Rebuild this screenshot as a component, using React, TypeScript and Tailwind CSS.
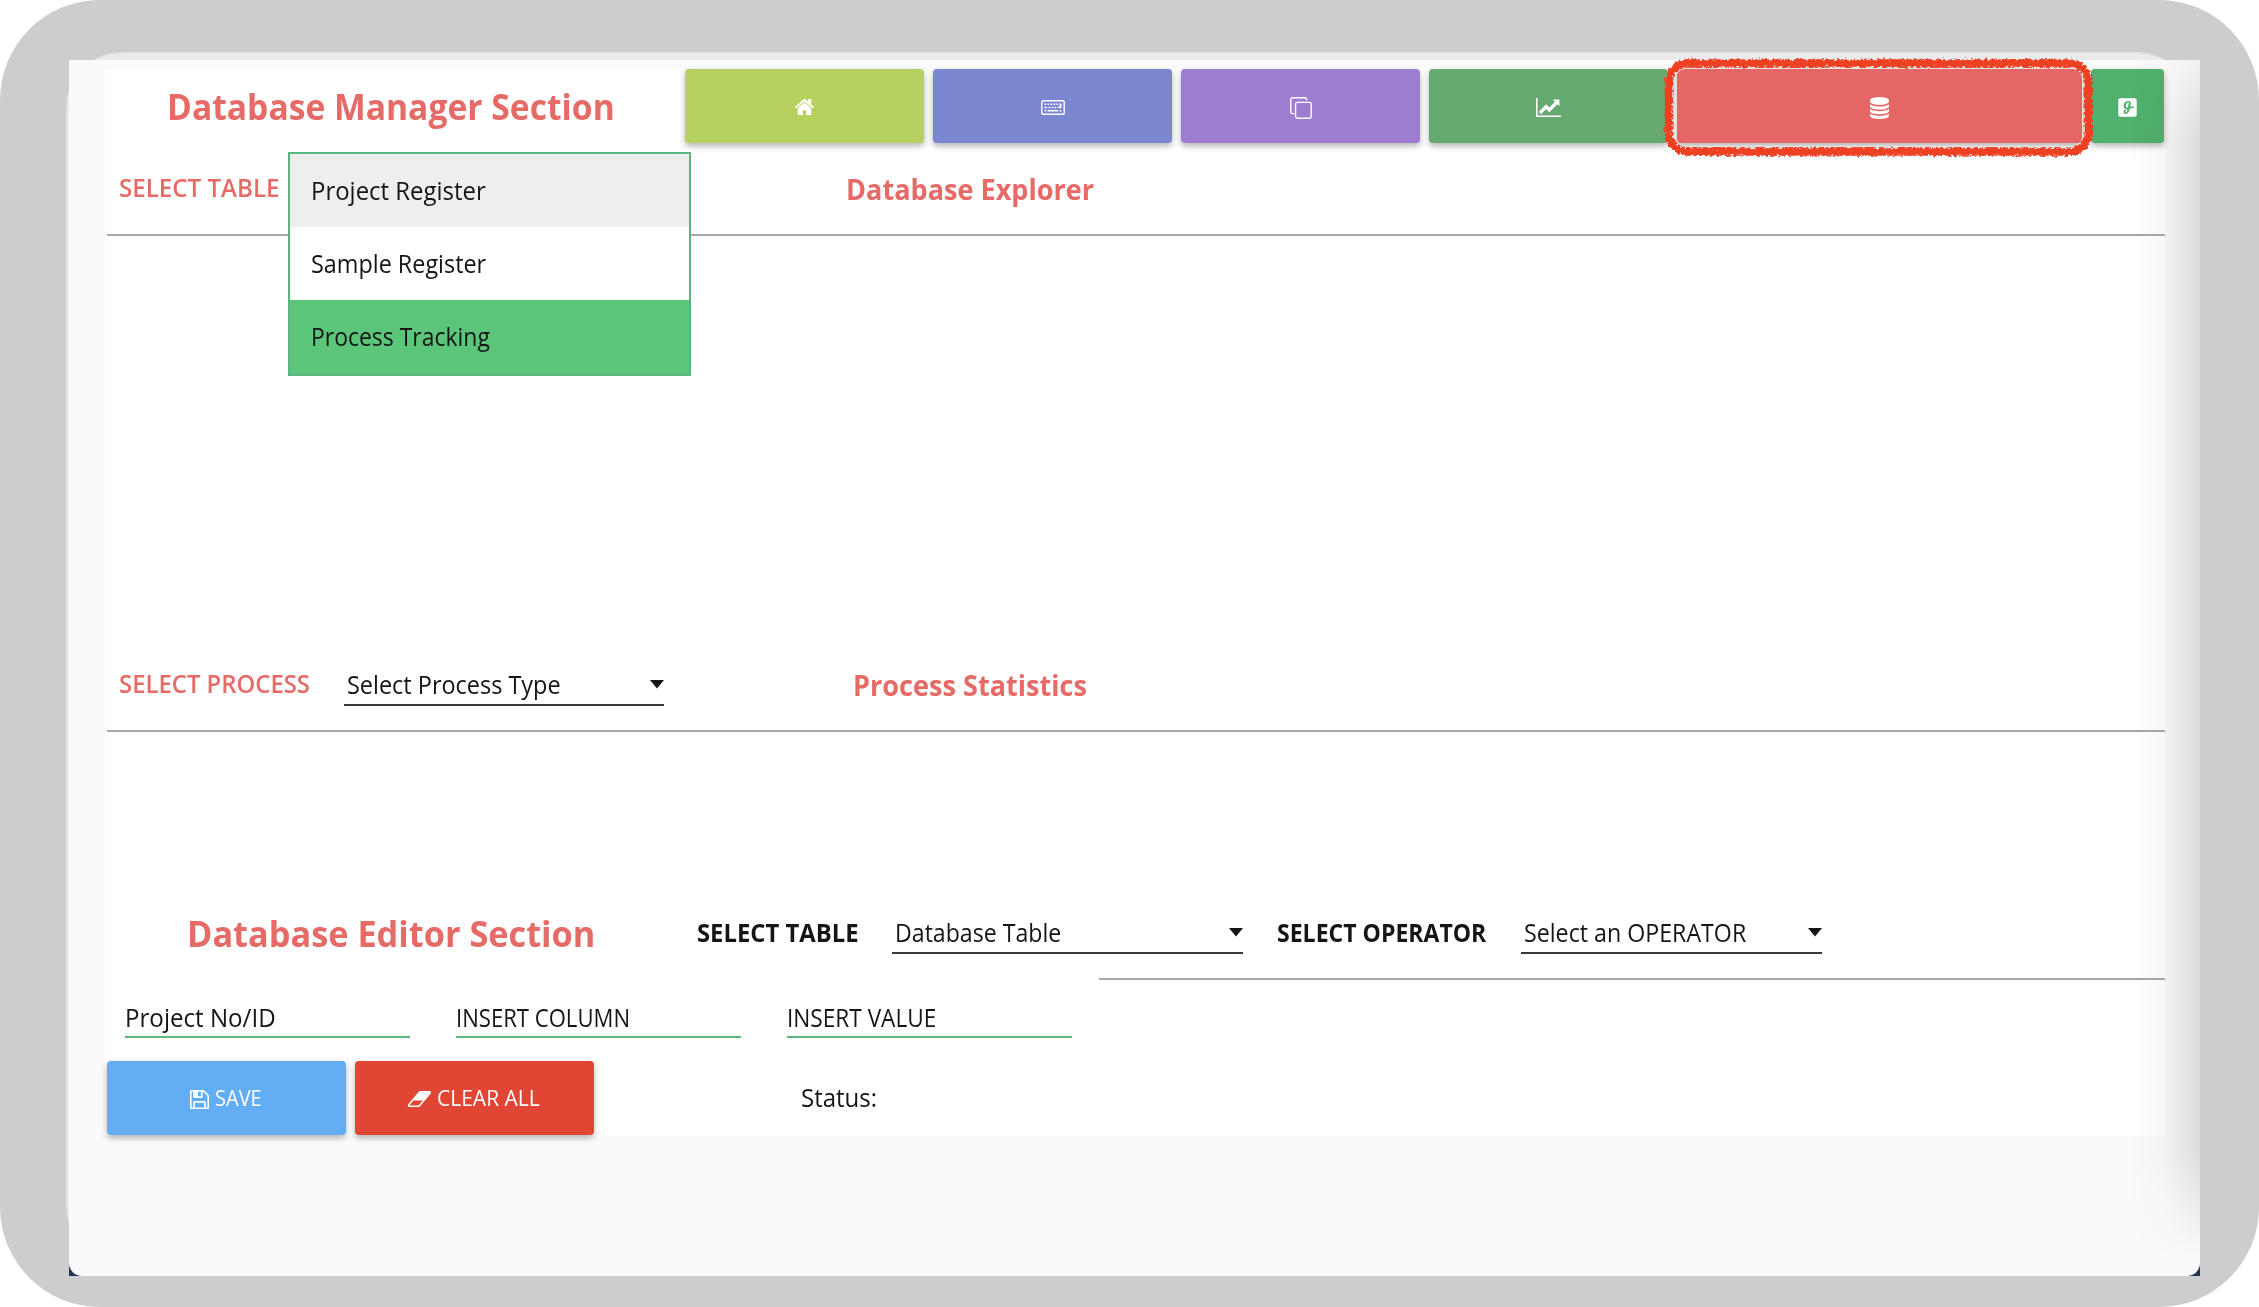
import React from "react";
import { FaGlide } from "react-icons/fa";

const FONT = "font-['Open_Sans',sans-serif]";

function Glyph({ d, box, className }: { d: string; box: string; className: string }) {
  return (
    <svg viewBox={box} className={className} fill="currentColor" preserveAspectRatio="none">
      <path d={d} />
    </svg>
  );
}

const HOME =
  "M1472 992v480q0 26-19 45t-45 19h-384v-384h-256v384h-384q-26 0-45-19t-19-45v-480q0-1 .5-3t.5-3l575-474 575 474q1 2 1 6zm223-69l-62 74q-8 9-21 11h-3q-13 0-21-7l-692-577-692 577q-12 8-24 7-13-2-21-11l-62-74q-8-10-7-23.5t11-21.5l719-599q32-26 76-26t76 26l244 204v-195q0-14 9-23t23-9h192q14 0 23 9t9 23v408l219 182q10 8 11 21.5t-7 23.5z";
const DATABASE =
  "M896 768q237 0 443-43t325-127v170q0 69-103 128t-280 93.5-385 34.5-385-34.5-280-93.5-103-128v-170q119 84 325 127t443 43zm0 768q237 0 443-43t325-127v170q0 69-103 128t-280 93.5-385 34.5-385-34.5-280-93.5-103-128v-170q119 84 325 127t443 43zm0-384q237 0 443-43t325-127v170q0 69-103 128t-280 93.5-385 34.5-385-34.5-280-93.5-103-128v-170q119 84 325 127t443 43zm0-1152q208 0 385 34.5t280 93.5 103 128v128q0 69-103 128t-280 93.5-385 34.5-385-34.5-280-93.5-103-128v-128q0-69 103-128t280-93.5 385-34.5z";
const CHART =
  "M2048 1536v128h-2048v-1536h128v1408h1920zm-128-1248v435q0 21-19.5 29.5t-35.5-7.5l-121-121-633 633q-10 10-23 10t-23-10l-233-233-416 416-192-192 585-585q10-10 23-10t23 10l233 233 464-464-121-121q-16-16-7.5-35.5t29.5-19.5h435q14 0 23 9t9 23z";
const ERASER =
  "M960 1408l336-384h-768l-336 384h768zm1013-1077q15 34 9.5 71.5t-30.5 65.5l-896 1024q-38 44-96 44h-768q-38 0-69.5-20.5t-47.5-54.5q-15-34-9.5-71.5t30.5-65.5l896-1024q38-44 96-44h768q38 0 69.5 20.5t47.5 54.5z";
const FLOPPY =
  "M512 1536h768v-384h-768v384zm896 0h128v-896q0-14-10-38.5t-20-34.5l-281-281q-10-10-34-20t-39-10v416q0 40-28 68t-68 28h-576q-40 0-68-28t-28-68v-416h-128v1280h128v-416q0-40 28-68t68-28h832q40 0 68 28t28 68v416zm-384-928v-320q0-13-9.5-22.5t-22.5-9.5h-192q-13 0-22.5 9.5t-9.5 22.5v320q0 13 9.5 22.5t22.5 9.5h192q13 0 22.5-9.5t9.5-22.5zm640 32v928q0 40-28 68t-68 28h-1344q-40 0-68-28t-28-68v-1344q0-40 28-68t68-28h928q40 0 88 20t76 48l280 280q28 28 48 76t20 88z";

function KeyboardIcon() {
  return (
    <svg viewBox="0 0 24 15" className="h-[15px] w-[24px]" fill="currentColor">
      <rect x="0.8" y="0.8" width="22.4" height="13.4" rx="1.2" fill="none" stroke="currentColor" strokeWidth="1.4" />
      <path d="M3.5 3.5h1.7v1.4H3.5zM6.5 3.5h1.7v1.4H6.5zM9.5 3.5h1.7v1.4H9.5zM12.5 3.5h1.7v1.4h-1.7zM15.5 3.5h1.7v1.4h-1.7zM3.5 6.8h2.7v1.4H3.5zM7.5 6.8h1.7v1.4H7.5zM10.5 6.8h1.7v1.4h-1.7zM13.5 6.8h1.7v1.4h-1.7zM18.6 3.5h1.8v4.7h-3.6V6.8h1.8zM3.5 10.1h1.7v1.4H3.5zM6.6 10.1h10.6v1.4H6.6zM18.7 10.1h1.7v1.4h-1.7z" />
    </svg>
  );
}

function CopyIcon() {
  return (
    <svg viewBox="0 0 22 22" className="h-[22px] w-[22px]" fill="none" stroke="currentColor" strokeWidth="1.4">
      <rect x="5.6" y="5.4" width="15.6" height="15.8" rx="1.6" />
      <path d="M16.6 3.6V2.2a1.4 1.4 0 0 0-1.4-1.4H2.2A1.4 1.4 0 0 0 .8 2.2v13a1.4 1.4 0 0 0 1.4 1.4h2" />
    </svg>
  );
}

const RAISED = "shadow-[0_3px_6px_rgba(0,0,0,0.3)]";

function Text({ children, fit }: { children: string; fit: string }) {
  return <span className={`inline-block origin-left whitespace-nowrap ${fit}`}>{children}</span>;
}

function Tile({ tone, children }: { tone: string; children: React.ReactNode }) {
  return (
    <button className={`flex h-[74px] shrink-0 items-center justify-center rounded-[4px] text-white ${RAISED} ${tone}`}>
      {children}
    </button>
  );
}

function Select({ label, width, fit }: { label: string; width: string; fit: string }) {
  return (
    <div className={`flex h-[42px] shrink-0 items-start justify-between border-b-2 border-[#3a3a3a] pl-[3px] text-[25px] leading-[40px] text-[#151515] ${width}`}>
      <Text fit={fit}>{label}</Text>
      <svg viewBox="0 0 14 9" className="mt-[16px] h-[9px] w-[14px] fill-[#151515]">
        <path d="M0 0h14L7 8.6z" />
      </svg>
    </div>
  );
}

function Input({ label, fit }: { label: string; fit: string }) {
  return (
    <div className="flex h-[40px] w-[285px] shrink-0 border-b-2 border-[#5eb87b] text-[25px] leading-[39px] text-[#151515]">
      <Text fit={fit}>{label}</Text>
    </div>
  );
}

function Rule({ width }: { width: string }) {
  return <div className={`h-[2px] shrink-0 self-end bg-[#a9a9a9] ${width}`} />;
}

function RoughOutline() {
  return (
    <svg viewBox="0 0 444 110" className="pointer-events-none absolute -left-[20px] -top-[16px] h-[110px] w-[444px]">
      <defs>
        <filter id="rough" x="-5%" y="-10%" width="110%" height="120%">
          <feTurbulence type="fractalNoise" baseFrequency="0.35" numOctaves="2" seed="4" result="n" />
          <feDisplacementMap in="SourceGraphic" in2="n" scale="6" xChannelSelector="R" yChannelSelector="G" />
        </filter>
        <filter id="speckle" x="-5%" y="-10%" width="110%" height="120%">
          <feTurbulence type="fractalNoise" baseFrequency="0.3" numOctaves="2" seed="9" result="n" />
          <feColorMatrix in="n" type="matrix" values="0 0 0 0 0  0 0 0 0 0  0 0 0 0 0  12 0 0 0 -5.6" result="m" />
          <feComposite in="SourceGraphic" in2="m" operator="in" />
        </filter>
      </defs>
      <rect x="16" y="13" width="412" height="83" rx="12" fill="none" stroke="#e6e2e2" strokeWidth="6" />
      <rect x="11.5" y="10" width="420" height="89" rx="19" fill="none" stroke="#ee4023" strokeWidth="7.5" filter="url(#rough)" />
      <rect x="14.5" y="13" width="414" height="83" rx="15" fill="none" stroke="#ee4023" strokeWidth="4" filter="url(#speckle)" />
    </svg>
  );
}

export default function App() {
  return (
    <div className={`relative h-[1307px] w-[2259px] overflow-hidden bg-white ${FONT}`}>
      <div className="h-full w-full rounded-[100px] bg-[#cdcdcd] pl-[66px] pt-[52px]">
        <div className="h-[1210px] w-[2127px] rounded-[56px] border border-[#e2e2e2] bg-[#eaeaea] pl-[2px] pt-[6.5px]">
          <div className="relative h-[1216px] w-[2131px] bg-[#1f3354]">
            <div className="h-full w-full rounded-b-[13px] bg-[#fafafa] pl-[36px] pt-[9px]">
              <main className="flex h-[1067px] w-[2060px] flex-col bg-white pl-px">
                <div className="flex h-[76px] shrink-0 gap-[9px] pt-[0.5px]">
                  <h1 className="w-[570px] shrink-0 pl-[61px] text-[36px] font-bold leading-[76px] text-[#e66a66]">
                    <Text fit="scale-x-[0.934]">Database Manager Section</Text>
                  </h1>
                  <Tile tone="w-[239px] bg-[#b6d15f] pt-[2px]"><Glyph d={HOME} box="89 253 1614 1283" className="h-[16px] w-[19px]" /></Tile>
                  <Tile tone="w-[239px] bg-[#7b86d0] pt-[3px]"><KeyboardIcon /></Tile>
                  <Tile tone="w-[239px] bg-[#9c7dcf] pt-[3px]"><CopyIcon /></Tile>
                  <Tile tone="w-[239px] bg-[#67aa71] pt-[3px]"><Glyph d={CHART} box="0 128 2048 1536" className="h-[19px] w-[25px]" /></Tile>
                  <div className="relative shrink-0">
                    <Tile tone="w-[405px] bg-[#e46765] pt-[3px]"><Glyph d={DATABASE} box="128 0 1536 1792" className="h-[22px] w-[19px]" /></Tile>
                    <RoughOutline />
                  </div>
                  <Tile tone="w-[73px] bg-[#51b06e] pt-[3px]"><FaGlide className="h-[21px] w-[19px]" /></Tile>
                </div>

                <section className="relative flex h-[91px] shrink-0 flex-col justify-between">
                  <div className="flex items-start pl-[13px] pt-[23px]">
                    <span className="w-[727px] shrink-0 text-[25px] font-semibold leading-[39px] text-[#e66a66]"><Text fit="scale-x-[0.965]">SELECT TABLE</Text></span>
                    <h2 className="text-[29px] font-bold leading-[42px] text-[#e66a66]"><Text fit="scale-x-[0.934]">Database Explorer</Text></h2>
                  </div>
                  <Rule width="w-[2058px]" />
                  <ul className="absolute left-[182px] top-[7px] w-[403px] border-2 border-[#5bb580] bg-white text-[25px] leading-[73px] text-[#151515]">
                    <li className="h-[73px] bg-[#eeeeee] pl-[21px]"><Text fit="scale-x-[0.958]">Project Register</Text></li>
                    <li className="h-[73px] pl-[21px]"><Text fit="scale-x-[0.935]">Sample Register</Text></li>
                    <li className="h-[74px] bg-[#5bc57a] pl-[21px]"><Text fit="scale-x-[0.918]">Process Tracking</Text></li>
                  </ul>
                </section>

                <section className="mt-[405px] flex h-[91px] shrink-0 flex-col justify-between">
                  <div className="flex items-start pl-[13px] pt-[23px]">
                    <span className="w-[225px] shrink-0 text-[25px] font-semibold leading-[39px] text-[#e66a66]"><Text fit="scale-x-[0.955]">SELECT PROCESS</Text></span>
                    <Select label="Select Process Type" width="w-[320px]" fit="scale-x-[0.938]" />
                    <h2 className="pl-[189px] text-[29px] font-bold leading-[42px] text-[#e66a66]"><Text fit="scale-x-[0.934]">Process Statistics</Text></h2>
                  </div>
                  <Rule width="w-[2058px]" />
                </section>

                <section className="mt-[157px] flex h-[91px] shrink-0 flex-col justify-between">
                  <div className="flex items-start pl-px pt-[23px]">
                    <h1 className="w-[590px] shrink-0 pl-[80px] text-[36px] font-bold leading-[44px] text-[#e66a66]"><Text fit="scale-x-[0.953]">Database Editor Section</Text></h1>
                    <span className="w-[195px] shrink-0 text-[25px] font-bold leading-[40px] text-[#151515]"><Text fit="scale-x-[0.953]">SELECT TABLE</Text></span>
                    <Select label="Database Table" width="w-[351px]" fit="scale-x-[0.925]" />
                    <span className="w-[278px] shrink-0 pl-[34px] text-[25px] font-bold leading-[40px] text-[#151515]"><Text fit="scale-x-[0.922]">SELECT OPERATOR</Text></span>
                    <Select label="Select an OPERATOR" width="w-[301px]" fit="scale-x-[0.928]" />
                  </div>
                  <Rule width="w-[1066px]" />
                </section>

                <div className="mt-[18px] flex shrink-0 gap-[46px] pl-[19px]">
                  <Input label="Project No/ID" fit="scale-x-[0.965]" />
                  <Input label="INSERT COLUMN" fit="scale-x-[0.884]" />
                  <Input label="INSERT VALUE" fit="scale-x-[0.905]" />
                </div>

                <div className="mt-[23px] flex shrink-0 gap-[9px] pl-px">
                  <Tile tone="w-[239px] bg-[#62adf3] gap-[6px] pl-[4px] text-[22px]"><Glyph d={FLOPPY} box="128 128 1536 1536" className="mt-[3px] h-[19px] w-[19px]" /><Text fit="scale-x-[0.91]">SAVE</Text></Tile>
                  <Tile tone="w-[239px] bg-[#e14534] gap-[6px] pl-[3px] text-[22px]"><Glyph d={ERASER} box="0 256 1984 1280" className="mt-[3px] h-[16px] w-[24px]" /><Text fit="scale-x-[0.955]">CLEAR ALL</Text></Tile>
                  <span className="pl-[198px] text-[25px] leading-[72px] text-[#151515]"><Text fit="scale-x-[0.96]">Status:</Text></span>
                </div>
              </main>
            </div>
            <div className="pointer-events-none absolute right-0 top-0 h-full w-[70px] bg-linear-to-r from-transparent via-black/3 to-black/12 mask-[linear-gradient(to_bottom,rgba(0,0,0,.3),black_80px,black_1090px,transparent_1200px)]" />
          </div>
        </div>
      </div>
    </div>
  );
}
